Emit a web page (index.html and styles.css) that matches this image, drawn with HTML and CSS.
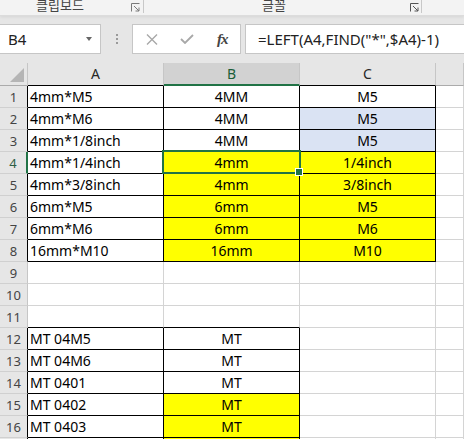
FILE: index.html
```html
<!DOCTYPE html>
<html>
<head>
    <title>Excel - LEFT/FIND</title>
    <link rel="stylesheet" href="styles.css">
</head>
<body>
    <div class="ribbon">
        <div class="group clip">
            <span class="group-label">클립보드</span>
            <svg class="launcher" width="9" height="9" viewBox="0 0 9 9"><path d="M0.5 8.5V0.5H8.5M3 3L8 8M8 4.5V8H4.5" fill="none" stroke="#7a7a7a" stroke-width="1"/></svg>
        </div>
        <div class="group font">
            <span class="group-label">글꼴</span>
            <svg class="launcher" width="9" height="9" viewBox="0 0 9 9"><path d="M0.5 8.5V0.5H8.5M3 3L8 8M8 4.5V8H4.5" fill="none" stroke="#555" stroke-width="1"/></svg>
        </div>
    </div>

    <div class="formula-bar">
        <div class="name-box">
            <span>B4</span>
            <span class="name-arrow"></span>
        </div>
        <div class="grip"><i></i><i></i><i></i></div>
        <div class="fx-buttons">
            <span class="fx-btn"><svg width="12" height="11" viewBox="0 0 12 11"><path d="M1 0.5L11 10.5M11 0.5L1 10.5" stroke="#a8a8a8" stroke-width="1.4"/></svg></span>
            <span class="fx-btn"><svg width="14" height="10" viewBox="0 0 14 10"><path d="M1 5L5 9L13 1" fill="none" stroke="#a8a8a8" stroke-width="1.8"/></svg></span>
            <span class="fx-btn fx">fx</span>
        </div>
        <div class="formula-input">=LEFT(A4,FIND("*",$A4)-1)</div>
    </div>

    <div class="sheet">
        <!-- column headers -->
        <div class="corner"><svg width="14" height="14" viewBox="0 0 14 14"><path d="M14 0V14H0Z" fill="#b5b5b5"/></svg></div>
        <div class="col-head kb">A</div>
        <div class="col-head selected">B</div>
        <div class="col-head kb">C</div>
        <div class="col-head"></div>

        <!-- row 1 -->
        <div class="row-head kr">1</div>
        <div class="cell kr kb">4mm*M5</div>
        <div class="cell center kr kb">4MM</div>
        <div class="cell center kr kb">M5</div>
        <div class="cell"></div>

        <div class="row-head kr">2</div>
        <div class="cell kr kb">4mm*M6</div>
        <div class="cell center kr kb">4MM</div>
        <div class="cell center kr kb blue">M5</div>
        <div class="cell"></div>

        <div class="row-head kr">3</div>
        <div class="cell kr kb">4mm*1/8inch</div>
        <div class="cell center kr kb">4MM</div>
        <div class="cell center kr kb blue">M5</div>
        <div class="cell"></div>

        <div class="row-head active">4</div>
        <div class="cell kr kb">4mm*1/4inch</div>
        <div class="cell center kr kb yellow current">4mm<span class="selection"><span class="fill-handle"></span></span></div>
        <div class="cell center kr kb yellow">1/4inch</div>
        <div class="cell"></div>

        <div class="row-head kr">5</div>
        <div class="cell kr kb">4mm*3/8inch</div>
        <div class="cell center kr kb yellow">4mm</div>
        <div class="cell center kr kb yellow">3/8inch</div>
        <div class="cell"></div>

        <div class="row-head kr">6</div>
        <div class="cell kr kb">6mm*M5</div>
        <div class="cell center kr kb yellow">6mm</div>
        <div class="cell center kr kb yellow">M5</div>
        <div class="cell"></div>

        <div class="row-head kr">7</div>
        <div class="cell kr kb">6mm*M6</div>
        <div class="cell center kr kb yellow">6mm</div>
        <div class="cell center kr kb yellow">M6</div>
        <div class="cell"></div>

        <div class="row-head kr">8</div>
        <div class="cell kr kb">16mm*M10</div>
        <div class="cell center kr kb yellow">16mm</div>
        <div class="cell center kr kb yellow">M10</div>
        <div class="cell"></div>

        <div class="row-head">9</div>
        <div class="cell"></div>
        <div class="cell"></div>
        <div class="cell"></div>
        <div class="cell"></div>

        <div class="row-head">10</div>
        <div class="cell"></div>
        <div class="cell"></div>
        <div class="cell"></div>
        <div class="cell"></div>

        <div class="row-head">11</div>
        <div class="cell kb"></div>
        <div class="cell kb"></div>
        <div class="cell"></div>
        <div class="cell"></div>

        <div class="row-head kr">12</div>
        <div class="cell kr kb">MT 04M5</div>
        <div class="cell center kr kb">MT</div>
        <div class="cell"></div>
        <div class="cell"></div>

        <div class="row-head kr">13</div>
        <div class="cell kr kb">MT 04M6</div>
        <div class="cell center kr kb">MT</div>
        <div class="cell"></div>
        <div class="cell"></div>

        <div class="row-head kr">14</div>
        <div class="cell kr kb">MT 0401</div>
        <div class="cell center kr kb">MT</div>
        <div class="cell"></div>
        <div class="cell"></div>

        <div class="row-head kr">15</div>
        <div class="cell kr kb">MT 0402</div>
        <div class="cell center kr kb yellow">MT</div>
        <div class="cell"></div>
        <div class="cell"></div>

        <div class="row-head kr">16</div>
        <div class="cell kr kb">MT 0403</div>
        <div class="cell center kr kb yellow">MT</div>
        <div class="cell"></div>
        <div class="cell"></div>

        <!-- row 17, only its top edge shows -->
        <div class="row-head kr"></div>
        <div class="cell kr kb"></div>
        <div class="cell center kr kb yellow"></div>
        <div class="cell"></div>
        <div class="cell"></div>
    </div>
</body>
</html>
```

FILE: styles.css
```css
body {
    margin: 0;
    width: 464px;
    height: 439px;
    overflow: hidden;
    font-family: "Noto Sans", "Noto Sans CJK KR", sans-serif;
    background-color: #e6e6e6;
}
.ribbon {
    display: flex;
    height: 15px;
    background-color: #f3f3f3;
    border-bottom: 1px solid #dcdcdc;
    box-shadow: 0 1px 3px rgba(0,0,0,0.08);
}
.group {
    display: flex;
    align-items: flex-start;
    height: 13px;
    border-right: 1px solid #c8c8c8;
}
.group-label {
    font-family: "Noto Sans CJK KR", sans-serif;
    font-size: 13px;
    line-height: 12px;
    margin-top: -1px;
    color: #444;
    text-align: center;
}
.clip {
    width: 143px;
}
.clip .group-label {
    width: 120px;
}
.clip .launcher {
    margin: 3px 0 0 11px;
}
.font {
    width: 277px;
}
.font .group-label {
    width: 260px;
}
.font .launcher {
    margin: 3px 0 0 6px;
}
/* Formula bar */
.formula-bar {
    display: flex;
    align-items: flex-start;
    padding-top: 8px;
    height: 39px;
}
.name-box {
    display: flex;
    align-items: center;
    justify-content: space-between;
    box-sizing: border-box;
    width: 102px;
    height: 30px;
    margin-left: -1px;
    padding: 0 8px 0 8px;
    background-color: white;
    border: 1px solid #c6c6c6;
    font-size: 15px;
    color: #222;
}
.name-arrow {
    width: 0;
    height: 0;
    border-left: 3.5px solid transparent;
    border-right: 3.5px solid transparent;
    border-top: 4px solid #666;
}
.grip {
    display: flex;
    flex-direction: column;
    align-items: center;
    justify-content: center;
    gap: 2px;
    width: 31px;
    height: 30px;
}
.grip i {
    width: 2px;
    height: 2px;
    background-color: #9a9a9a;
}
.fx-buttons {
    display: flex;
    align-items: center;
    box-sizing: border-box;
    width: 109px;
    height: 30px;
    padding-left: 1px;
    background-color: white;
    border: 1px solid #c6c6c6;
}
.fx-btn {
    display: flex;
    justify-content: center;
    width: 36px;
}
.fx {
    font-family: "Liberation Serif", serif;
    font-style: italic;
    font-weight: bold;
    font-size: 15px;
    color: #444;
    letter-spacing: -1px;
}
.formula-input {
    flex: 1;
    box-sizing: border-box;
    height: 30px;
    margin-left: 4px;
    margin-right: -2px;
    padding-left: 12px;
    background-color: white;
    border: 1px solid #c6c6c6;
    font-size: 15px;
    line-height: 28px;
    color: #222;
    white-space: nowrap;
}
/* Sheet grid */
.sheet {
    display: grid;
    grid-template-columns: 28px 136px 136px 136px 1fr;
    grid-template-rows: 23px;
    grid-auto-rows: 22px;
    background-color: white;
}
.corner, .col-head, .row-head, .cell {
    box-sizing: border-box;
    border-right: 1px solid #d4d4d4;
    border-bottom: 1px solid #d4d4d4;
}
.corner {
    display: flex;
    align-items: flex-end;
    justify-content: flex-end;
    padding: 0 3px 3px 0;
    background-color: #e6e6e6;
    border-right-color: #c6c6c6;
    border-bottom-color: #ababab;
}
.col-head {
    background-color: #e6e6e6;
    border-right-color: #c6c6c6;
    border-bottom-color: #ababab;
    text-align: center;
    font-size: 14px;
    line-height: 21px;
    color: #262626;
}
.col-head.selected {
    background-color: #d2d2d2;
    border-bottom: 2px solid #217346;
    color: #1b5e39;
}
.row-head {
    background-color: #e6e6e6;
    border-right-color: #c6c6c6;
    border-bottom-color: #d0d0d0;
    text-align: center;
    font-size: 13px;
    line-height: 22px;
    color: #444;
}
.row-head.active {
    border-right: 2px solid #217346;
    color: #2f5f45;
}
.cell {
    position: relative;
    padding: 0 2px;
    font-size: 14px;
    line-height: 21px;
    color: #000;
    white-space: nowrap;
}
.center {
    text-align: center;
}
.kr {
    border-right-color: #000;
}
.kb {
    border-bottom-color: #000;
}
.yellow {
    background-color: #ffff00;
}
.blue {
    background-color: #dae3f3;
}
/* Active cell outline */
.selection {
    position: absolute;
    left: -2px;
    top: -2px;
    right: -2px;
    bottom: -1px;
    border: 2px solid #217346;
    z-index: 2;
}
.fill-handle {
    position: absolute;
    right: -4px;
    bottom: -4px;
    width: 6px;
    height: 6px;
    background-color: #217346;
    border: 1px solid white;
}
```
